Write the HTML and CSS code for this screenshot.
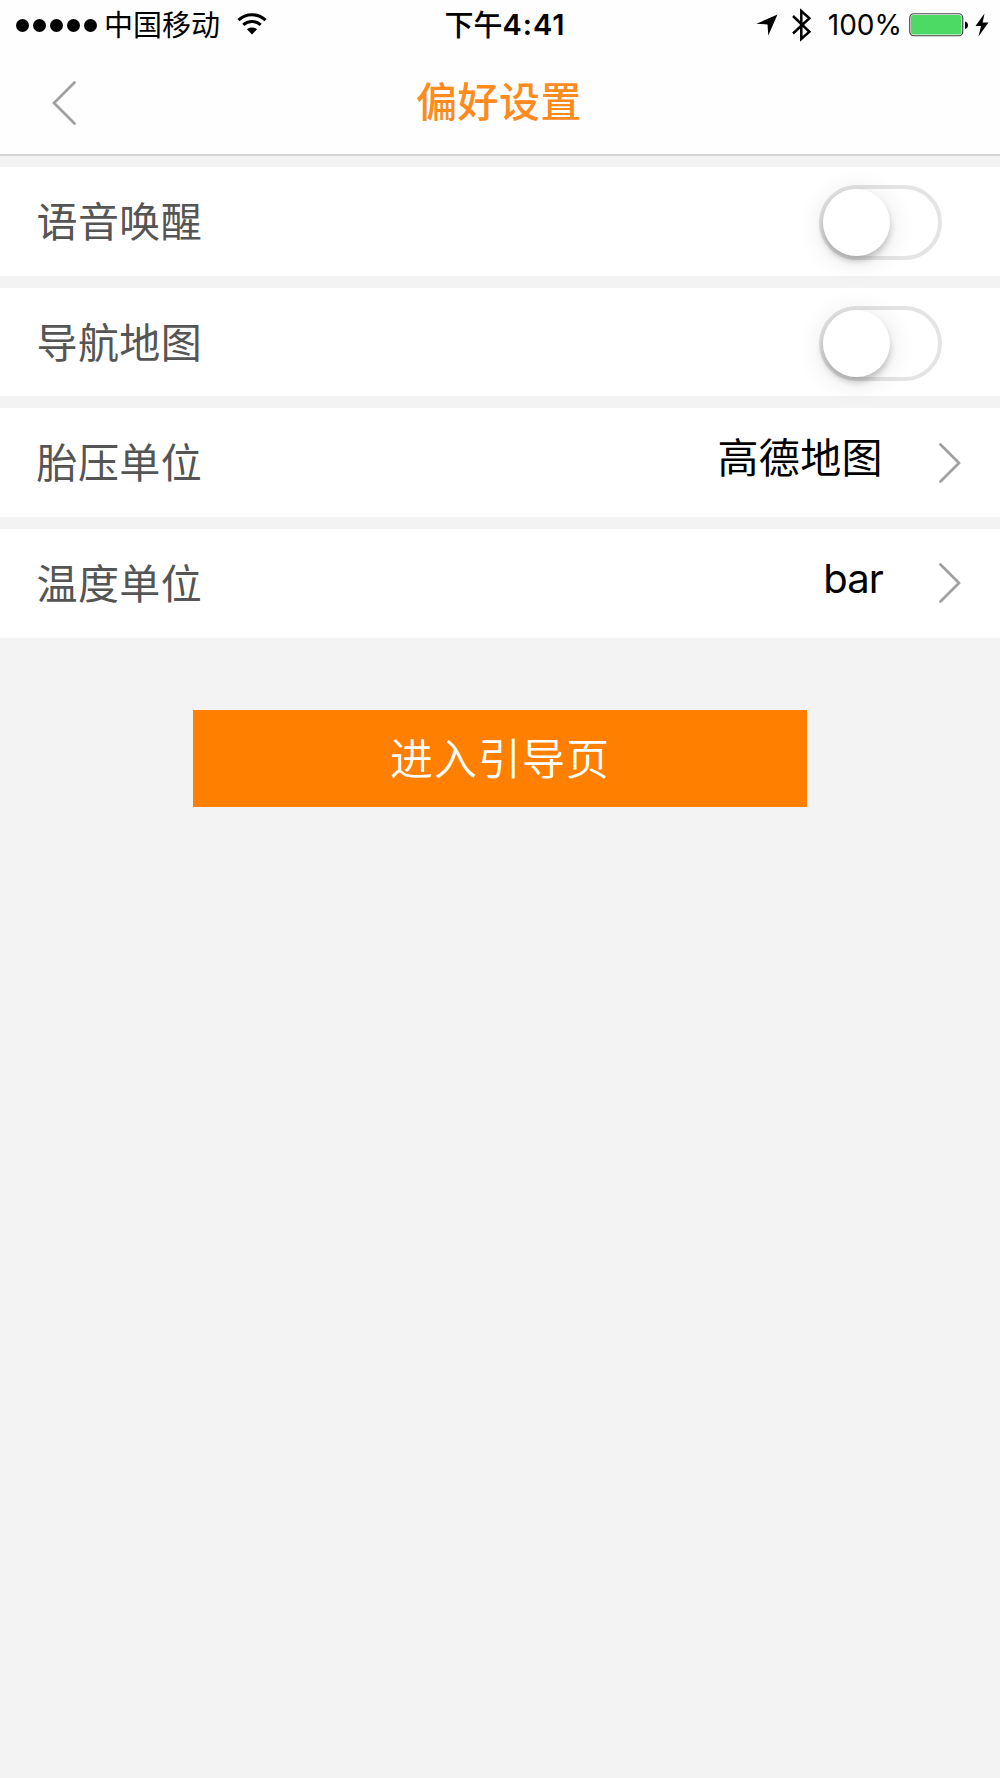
FILE: index.html
```html
<!DOCTYPE html>
<html lang="zh-CN">
<head>
<meta charset="utf-8">
<title>偏好设置</title>
<link rel="stylesheet" href="styles.css">
</head>
<body>
<header class="header">
  <div class="status">
    <div class="status-left">
      <div class="signal"><i></i><i></i><i></i><i></i><i></i></div>
      <span class="carrier">中国移动</span>
      <svg class="wifi" width="30" height="22" viewBox="0 0 30 22">
        <path d="M1.5 7.2C9.2-.1 20.8-.1 28.5 7.2M6.3 11.8C11.3 7.3 18.7 7.3 23.7 11.8" fill="none" stroke="#000" stroke-width="3.1"/>
        <path d="M9.9 16.2C12.7 13.8 17.3 13.8 20.1 16.2L15 21.6Z"/>
      </svg>
    </div>
    <div class="time"><span class="ampm">下午</span><span class="clock">4:41</span></div>
    <div class="status-right">
      <svg class="location" width="22" height="22" viewBox="0 0 22 22"><path d="M21.5.5 12.3 21.5 11.5 10.5.5 9.7Z"/></svg>
      <svg class="bluetooth" width="20" height="34" viewBox="0 0 20 34"><path d="M1 8 17.4 23.8 9.3 31V3L17.4 10.2 1 25.5" fill="none" stroke="#000" stroke-width="2.5"/></svg>
      <span class="percent">100%</span>
      <svg class="battery" width="60" height="24" viewBox="0 0 60 24">
        <rect x=".75" y=".75" width="53" height="22" rx="4" fill="#fff" stroke="#444" stroke-width="1.2"/>
        <rect x="2" y="2" width="50.5" height="19.5" rx="2.5" fill="#4cd964"/>
        <path d="M56 8.5C60 9 60 15.5 56 16Z"/>
      </svg>
      <svg class="bolt" width="14" height="24" viewBox="0 0 14 24"><path d="M9.5.5.5 13H6L3.5 23.5 13.5 9.5H7.7Z"/></svg>
    </div>
  </div>
  <nav class="nav">
    <svg class="back" width="25" height="44" viewBox="0 0 25 44"><path d="M22.5 1.5 2 22 22.5 42.5"/></svg>
    <h1 class="title">偏好设置</h1>
  </nav>
</header>
<main class="settings">
  <section class="row"><span class="label">语音唤醒</span><span class="toggle"><span class="knob"></span></span></section>
  <section class="row"><span class="label">导航地图</span><span class="toggle"><span class="knob"></span></span></section>
  <section class="row"><span class="label">胎压单位</span><span class="value">高德地图</span>
    <svg class="chevron" width="22" height="40" viewBox="0 0 22 40"><path d="M1.5 1.5 20 20 1.5 38.5"/></svg></section>
  <section class="row"><span class="label">温度单位</span><span class="value latin">bar</span>
    <svg class="chevron" width="22" height="40" viewBox="0 0 22 40"><path d="M1.5 1.5 20 20 1.5 38.5"/></svg></section>
</main>
<button class="guide">进入引导页</button>
</body>
</html>
```
FILE: styles.css
```css
* { box-sizing: border-box; }

body {
  margin: 0;
  min-height: 1778px;
  background: #f3f3f3;
  color: #000;
  font-family: "Noto Sans CJK SC", sans-serif;
}

svg { display: block; flex: none; }

.header {
  height: 156px;
  background: #fefefe;
  border-bottom: 2px solid #d4d4d4;
}

.status {
  display: grid;
  grid-template-columns: 1fr auto 1fr;
  align-items: center;
  height: 50px;
  padding: 0 12px 0 16px;
  font-size: 28px;
  line-height: 50px;
}

.status-left, .status-right { display: flex; align-items: center; }
.status-right { justify-content: flex-end; }

.signal { display: flex; gap: 4px; margin-right: 7px; }
.signal i { width: 13px; height: 13px; border-radius: 50%; background: #000; }

.carrier { padding-bottom: 3px; font-size: 29px; line-height: 47px; }
.wifi { margin-left: 17px; margin-top: -2px; }

.time {
  display: flex;
  margin-left: 6px;
  font-family: Inter, sans-serif;
  font-weight: 600;
}
.clock { font-size: 29px; letter-spacing: 1px; }
.ampm {
  padding-bottom: 3px;
  font-family: "Noto Sans CJK SC", sans-serif;
  font-size: 29px;
  font-weight: 500;
  line-height: 47px;
}

.percent { font-family: Inter, sans-serif; margin: 0 7px 0 16px; }
.location { margin-right: 14px; }
.bolt { margin-left: 6px; }
.status-right { padding-right: 0; margin-right: -1px; }

.nav {
  display: grid;
  grid-template-columns: 100px 1fr 100px;
  align-items: center;
  height: 104px;
}
.back { margin: 1px 0 0 52px; }
.back, .chevron { fill: none; stroke: #a0a0a0; stroke-width: 2.7; stroke-linecap: round; }

.title {
  margin: 0 2px 0 0;
  padding-bottom: 6px;
  text-align: center;
  color: #ff8a1e;
  font-size: 41px;
  font-weight: 500;
  letter-spacing: .4px;
  line-height: 60px;
}

.settings {
  display: flex;
  flex-direction: column;
  gap: 12px;
  padding-top: 11px;
}

.row {
  display: flex;
  align-items: center;
  height: 108.7px;
  padding-left: 36.5px;
  padding-right: 39px;
  background: #fff;
  font-size: 41px;
  line-height: 60px;
  letter-spacing: .4px;
}
.label { flex: 1; padding-bottom: 5px; color: #555; }
.value { margin-right: 56px; padding-bottom: 15px; }
.latin { padding-bottom: 9px; font-family: Inter, sans-serif; font-size: 40px; letter-spacing: -.9px; }

.toggle {
  width: 123px;
  height: 75px;
  margin: 2px 19px 0 0;
  border: 4px solid #e4e4e4;
  border-radius: 38px;
}
.knob {
  display: block;
  width: 67px;
  height: 67px;
  margin-left: -.5px;
  border-radius: 50%;
  background: #fff;
  box-shadow: 0 5px 6px rgba(0, 0, 0, .2), 0 4px 28px rgba(0, 0, 0, .12);
}

.guide {
  display: block;
  width: 614px;
  height: 97px;
  margin: 72px auto 0;
  padding: 0 0 4px;
  border: 0;
  background: #ff8000;
  color: #fff;
  font: 350 43px/93px "Noto Sans CJK SC", sans-serif;
  letter-spacing: 1px;
}
```
